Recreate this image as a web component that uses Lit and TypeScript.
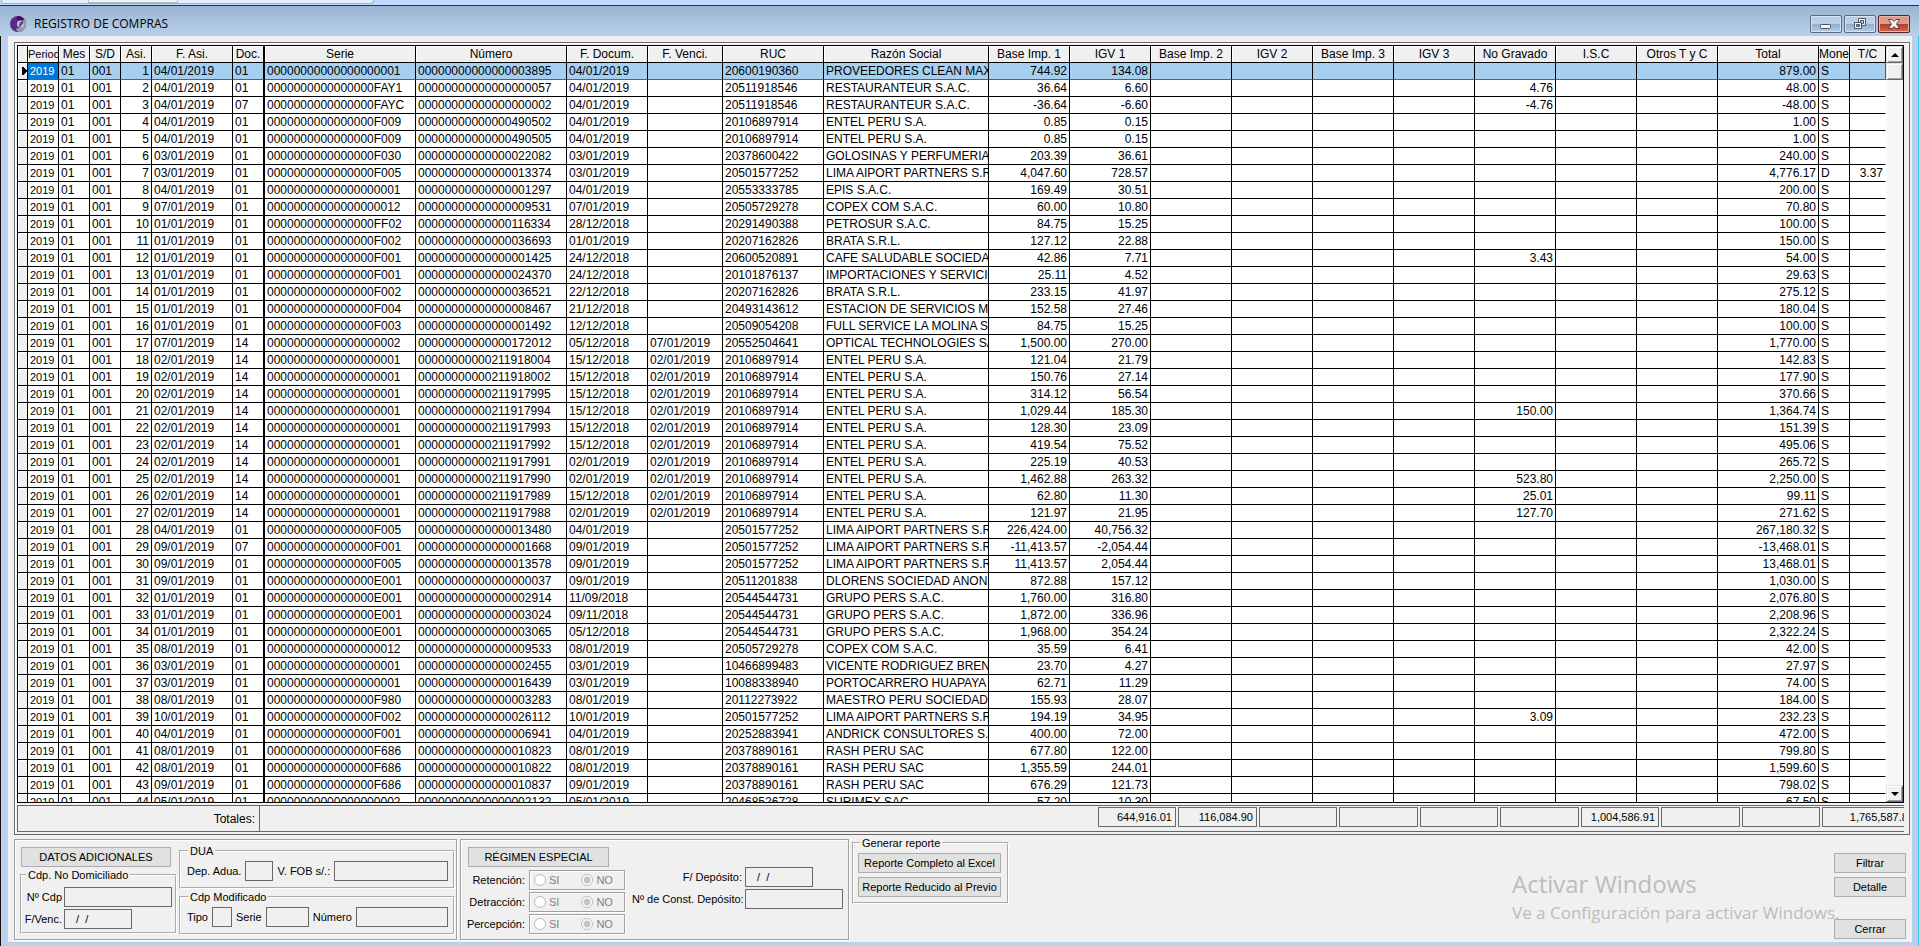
import { LitElement, html, css, nothing } from 'lit';
import { customElement } from 'lit/decorators.js';
import { classMap } from 'lit/directives/class-map.js';

type Align = 'l' | 'r';
interface Column { title: string; cls: string; align: Align; key: number }

const COLUMNS: Column[] = [
  { title: 'Period', cls: 'w31', align: 'l', key: 0 },
  { title: 'Mes', cls: 'w31', align: 'l', key: 1 },
  { title: 'S/D', cls: 'w31', align: 'l', key: 2 },
  { title: 'Asi.', cls: 'w31', align: 'r', key: 3 },
  { title: 'F. Asi.', cls: 'w81', align: 'l', key: 4 },
  { title: 'Doc.', cls: 'w32', align: 'l', key: 5 },
  { title: 'Serie', cls: 'w151', align: 'l', key: 6 },
  { title: 'Número', cls: 'w151', align: 'l', key: 7 },
  { title: 'F. Docum.', cls: 'w81', align: 'l', key: 8 },
  { title: 'F. Venci.', cls: 'w75', align: 'l', key: 9 },
  { title: 'RUC', cls: 'w101', align: 'l', key: 10 },
  { title: 'Razón Social', cls: 'wauto', align: 'l', key: 11 },
  { title: 'Base Imp. 1', cls: 'w81', align: 'r', key: 12 },
  { title: 'IGV 1', cls: 'w81', align: 'r', key: 13 },
  { title: 'Base Imp. 2', cls: 'w81', align: 'r', key: 14 },
  { title: 'IGV 2', cls: 'w81', align: 'r', key: 15 },
  { title: 'Base Imp. 3', cls: 'w81', align: 'r', key: 16 },
  { title: 'IGV 3', cls: 'w81', align: 'r', key: 17 },
  { title: 'No Gravado', cls: 'w81', align: 'r', key: 18 },
  { title: 'I.S.C', cls: 'w81', align: 'r', key: 19 },
  { title: 'Otros T y C', cls: 'w81', align: 'r', key: 20 },
  { title: 'Total', cls: 'w101', align: 'r', key: 21 },
  { title: 'Mone', cls: 'w31', align: 'l', key: 22 },
  { title: 'T/C', cls: 'w36', align: 'r', key: 23 },
];

// F. Asi | Doc | Serie | Número | F. Docum | F. Venci | RUC | Razón | Base 1 | IGV 1 | No gravado | Total | Moneda | T/C
const DATA = `
04/01/2019|01|1|3895|04/01/2019||20600190360|PROVEEDORES CLEAN MAX|744.92|134.08||879.00|S|
04/01/2019|01|FAY1|57|04/01/2019||20511918546|RESTAURANTEUR S.A.C.|36.64|6.60|4.76|48.00|S|
04/01/2019|07|FAYC|2|04/01/2019||20511918546|RESTAURANTEUR S.A.C.|-36.64|-6.60|-4.76|-48.00|S|
04/01/2019|01|F009|490502|04/01/2019||20106897914|ENTEL PERU S.A.|0.85|0.15||1.00|S|
04/01/2019|01|F009|490505|04/01/2019||20106897914|ENTEL PERU S.A.|0.85|0.15||1.00|S|
03/01/2019|01|F030|22082|03/01/2019||20378600422|GOLOSINAS Y PERFUMERIA|203.39|36.61||240.00|S|
03/01/2019|01|F005|13374|03/01/2019||20501577252|LIMA AIPORT PARTNERS S.R|4,047.60|728.57||4,776.17|D|3.37
04/01/2019|01|1|1297|04/01/2019||20553333785|EPIS S.A.C.|169.49|30.51||200.00|S|
07/01/2019|01|12|9531|07/01/2019||20505729278|COPEX COM S.A.C.|60.00|10.80||70.80|S|
01/01/2019|01|FF02|116334|28/12/2018||20291490388|PETROSUR S.A.C.|84.75|15.25||100.00|S|
01/01/2019|01|F002|36693|01/01/2019||20207162826|BRATA S.R.L.|127.12|22.88||150.00|S|
01/01/2019|01|F001|1425|24/12/2018||20600520891|CAFE SALUDABLE SOCIEDAD|42.86|7.71|3.43|54.00|S|
01/01/2019|01|F001|24370|24/12/2018||20101876137|IMPORTACIONES Y SERVICIO|25.11|4.52||29.63|S|
01/01/2019|01|F002|36521|22/12/2018||20207162826|BRATA S.R.L.|233.15|41.97||275.12|S|
01/01/2019|01|F004|8467|21/12/2018||20493143612|ESTACION DE SERVICIOS MA|152.58|27.46||180.04|S|
01/01/2019|01|F003|1492|12/12/2018||20509054208|FULL SERVICE LA MOLINA SA|84.75|15.25||100.00|S|
07/01/2019|14|2|172012|05/12/2018|07/01/2019|20552504641|OPTICAL TECHNOLOGIES SA|1,500.00|270.00||1,770.00|S|
02/01/2019|14|1|211918004|15/12/2018|02/01/2019|20106897914|ENTEL PERU S.A.|121.04|21.79||142.83|S|
02/01/2019|14|1|211918002|15/12/2018|02/01/2019|20106897914|ENTEL PERU S.A.|150.76|27.14||177.90|S|
02/01/2019|14|1|211917995|15/12/2018|02/01/2019|20106897914|ENTEL PERU S.A.|314.12|56.54||370.66|S|
02/01/2019|14|1|211917994|15/12/2018|02/01/2019|20106897914|ENTEL PERU S.A.|1,029.44|185.30|150.00|1,364.74|S|
02/01/2019|14|1|211917993|15/12/2018|02/01/2019|20106897914|ENTEL PERU S.A.|128.30|23.09||151.39|S|
02/01/2019|14|1|211917992|15/12/2018|02/01/2019|20106897914|ENTEL PERU S.A.|419.54|75.52||495.06|S|
02/01/2019|14|1|211917991|02/01/2019|02/01/2019|20106897914|ENTEL PERU S.A.|225.19|40.53||265.72|S|
02/01/2019|14|1|211917990|02/01/2019|02/01/2019|20106897914|ENTEL PERU S.A.|1,462.88|263.32|523.80|2,250.00|S|
02/01/2019|14|1|211917989|15/12/2018|02/01/2019|20106897914|ENTEL PERU S.A.|62.80|11.30|25.01|99.11|S|
02/01/2019|14|1|211917988|02/01/2019|02/01/2019|20106897914|ENTEL PERU S.A.|121.97|21.95|127.70|271.62|S|
04/01/2019|01|F005|13480|04/01/2019||20501577252|LIMA AIPORT PARTNERS S.R|226,424.00|40,756.32||267,180.32|S|
09/01/2019|07|F001|1668|09/01/2019||20501577252|LIMA AIPORT PARTNERS S.R|-11,413.57|-2,054.44||-13,468.01|S|
09/01/2019|01|F005|13578|09/01/2019||20501577252|LIMA AIPORT PARTNERS S.R|11,413.57|2,054.44||13,468.01|S|
09/01/2019|01|E001|37|09/01/2019||20511201838|DLORENS SOCIEDAD ANON|872.88|157.12||1,030.00|S|
01/01/2019|01|E001|2914|11/09/2018||20544544731|GRUPO PERS S.A.C.|1,760.00|316.80||2,076.80|S|
01/01/2019|01|E001|3024|09/11/2018||20544544731|GRUPO PERS S.A.C.|1,872.00|336.96||2,208.96|S|
01/01/2019|01|E001|3065|05/12/2018||20544544731|GRUPO PERS S.A.C.|1,968.00|354.24||2,322.24|S|
08/01/2019|01|12|9533|08/01/2019||20505729278|COPEX COM S.A.C.|35.59|6.41||42.00|S|
03/01/2019|01|1|2455|03/01/2019||10466899483|VICENTE RODRIGUEZ BREN|23.70|4.27||27.97|S|
03/01/2019|01|1|16439|03/01/2019||10088338940|PORTOCARRERO HUAPAYA|62.71|11.29||74.00|S|
08/01/2019|01|F980|3283|08/01/2019||20112273922|MAESTRO PERU SOCIEDAD|155.93|28.07||184.00|S|
10/01/2019|01|F002|26112|10/01/2019||20501577252|LIMA AIPORT PARTNERS S.R|194.19|34.95|3.09|232.23|S|
04/01/2019|01|F001|6941|04/01/2019||20252883941|ANDRICK CONSULTORES S.|400.00|72.00||472.00|S|
08/01/2019|01|F686|10823|08/01/2019||20378890161|RASH PERU SAC|677.80|122.00||799.80|S|
08/01/2019|01|F686|10822|08/01/2019||20378890161|RASH PERU SAC|1,355.59|244.01||1,599.60|S|
09/01/2019|01|F686|10837|09/01/2019||20378890161|RASH PERU SAC|676.29|121.73||798.02|S|
05/01/2019|01|2|2132|05/01/2019||20468526728|SURIMEX SAC|57.20|10.30||67.50|S|`;

const ROWS: string[][] = DATA.trim().split('\n').map((line, i) => {
  const [fAsi, doc, serie, num, fDoc, fVen, ruc, name, base, igv, noGrav, total, cur, tc] = line.split('|');
  return ['2019', '01', '001', String(i + 1), fAsi, doc, serie.padStart(20, '0'), num.padStart(20, '0'),
    fDoc, fVen, ruc, name, base, igv, '', '', '', '', noGrav, '', '', total, cur, tc];
});

const TOTALS = ['644,916.01', '116,084.90', '', '', '', '', '1,004,586.91', '', '', '1,765,587.82'];

@customElement('compras-grid')
export class ComprasGrid extends LitElement {
  static styles = css`
    :host { display: flex; flex: 1 1 0; min-height: 0; border: 1px solid #000; background: #fff; overflow: hidden; }
    .view { flex: 1; min-width: 0; overflow: hidden; }
    table { width: 100%; table-layout: fixed; border-collapse: separate; border-spacing: 0; font: 12px/16px "Liberation Sans", Arial, sans-serif; color: #000; }
    th, td { box-sizing: border-box; height: 17px; padding: 0 2px; border-right: 1px solid #000; border-bottom: 1px solid #000; overflow: hidden; white-space: nowrap; font-weight: 400; }
    th { background: #f0f0f0; text-align: center; box-shadow: inset 1px 1px 0 #fff; padding: 0; }
    td { text-align: left; }
    td.r { text-align: right; }
    .period { font-size: 11px; }
    th.period { text-align: left; }
    td.doc, th.doc { border-right-width: 2px; }
    td.last { border-right-color: #fff; }
    td.mark { background: #f0f0f0; padding: 0; box-shadow: inset 1px 1px 0 #fff; }
    tr.sel td { background: #a6cff0; border-bottom-color: #0078d7; }
    tr.sel td.mark { background: #f0f0f0; border-bottom-color: #000; }
    tr.sel td.period { background: #0078d7; color: #fff; }
    tr.sel td.last { border-right-color: #0078d7; }
    .arrow { display: block; margin-left: 4px; }
    .w10 { width: 10px; } .w31 { width: 31px; } .w32 { width: 32px; } .w36 { width: 36px; } .w75 { width: 75px; }
    .w81 { width: 81px; } .w101 { width: 101px; } .w151 { width: 151px; }
    .bar { flex: none; width: 17px; display: flex; flex-direction: column; background: repeating-conic-gradient(#f0f0f0 0 25%, #fff 0 50%) 0 0 / 2px 2px; }
    .bar button, .thumb { box-sizing: border-box; width: 17px; height: 17px; padding: 0; background: #f0f0f0; border: 1px solid; border-color: #e3e3e3 #696969 #696969 #e3e3e3; box-shadow: inset 1px 1px 0 #fff, inset -1px -1px 0 #a0a0a0; display: flex; align-items: center; justify-content: center; }
    .bar .down { margin-top: auto; }
  `;

  render() {
    return html`
      <div class="view">
        <table>
          <colgroup>
            <col class="w10">${COLUMNS.map((c) => html`<col class=${c.cls}>`)}
          </colgroup>
          <thead>
            <tr>
              <th></th>
              ${COLUMNS.map((c) => html`<th class=${classMap({ period: c.key === 0, doc: c.key === 5 })}>${c.title}</th>`)}
            </tr>
          </thead>
          <tbody>
            ${ROWS.map((row, i) => html`
              <tr class=${i === 0 ? 'sel' : ''}>
                <td class="mark">${i === 0 ? html`<svg class="arrow" width="5" height="8" viewBox="0 0 5 8"><path d="M0 0h2v1h1v1h1v1h1v2h-1v1h-1v1h-1v1h-2z"/></svg>` : nothing}</td>
                ${COLUMNS.map((c) => html`<td class=${classMap({ r: c.align === 'r', period: c.key === 0, doc: c.key === 5, last: c.key === 23 })}>${row[c.key]}</td>`)}
              </tr>`)}
          </tbody>
        </table>
      </div>
      <div class="bar">
        <button aria-label="Subir"><svg width="8" height="4" viewBox="0 0 8 4"><path d="M0 4L4 0L8 4z"/></svg></button>
        <div class="thumb"></div>
        <button class="down" aria-label="Bajar"><svg width="8" height="4" viewBox="0 0 8 4"><path d="M0 0h8L4 4z"/></svg></button>
      </div>`;
  }
}

@customElement('app-root')
export class AppRoot extends LitElement {
  static styles = css`
    :host { display: flex; flex-direction: column; height: 100vh; position: relative; overflow: hidden; font: 11px/14px "Liberation Sans", Arial, sans-serif; color: #000; background: #b9d1ea; }
    * { box-sizing: border-box; }
    .strip { flex: none; height: 6px; background: #bfdbff; border-bottom: 1px solid #2b3440; padding-left: 1px; }
    .tab { width: 373px; height: 4px; background: #e1f0fa; border: 1px solid #86b9d8; border-top: 0; border-radius: 0 0 3px 3px; padding-left: 86px; }
    .slot { width: 90px; height: 3px; background: #f2f2f2; border: 1px solid #b4bcc4; border-top: 0; }
    .title { flex: none; height: 30px; display: flex; align-items: center; padding: 6px 9px 0 10px; background: linear-gradient(#9ab3d2, #b9d1ea); }
    h1 { margin: 0 auto 0 8px; font: 12px/16px "Open Sans", "Noto Sans", sans-serif; }
    .caps { display: flex; gap: 2px; }
    .cap { width: 32px; height: 18px; padding: 0; border: 1px solid #5b6b80; border-radius: 2px; box-shadow: inset 0 0 0 1px #d5e3f3; background: linear-gradient(#b9cfe7 50%, #92aece 50%, #b4cbe5); display: flex; align-items: center; justify-content: center; }
    .cap.close { background: linear-gradient(#dc9a8d 50%, #b8381f 50%, #cf6a50); border-color: #5c1f1a; box-shadow: inset 0 0 0 1px #e9b5a9; }
    .frame { flex: 1; min-height: 0; display: flex; padding: 0 6px 4px 7px; border-left: 1px solid #111; border-right: 1px solid #36c8e8; }
    main { flex: 1; min-width: 0; display: flex; flex-direction: column; background: #f0f0f0; padding: 6px 6px 2px; }
    .group { flex: 1; min-height: 0; display: flex; flex-direction: column; gap: 2px; border: 1px solid #696969; margin-right: -4px; padding: 2px 5px 2px 2px; box-shadow: inset 1px 1px 0 #fff; }
    .totals { flex: none; height: 27px; display: flex; border: 1px solid #696969; border-right: 0; }
    .tlabel { width: 242px; border-right: 1px solid #696969; text-align: right; padding-right: 4px; font-size: 12px; line-height: 26px; }
    .boxes { width: 806px; margin-left: auto; display: flex; gap: 2px; padding-top: 1px; overflow: hidden; }
    .boxes output { flex: none; width: 78px; height: 20px; border: 1px solid #696969; text-align: right; padding-right: 3px; line-height: 18px; }
    .boxes output:nth-child(even) { width: 79px; }
    .boxes output:last-child { width: 96px; }
    .bottom { flex: none; display: flex; align-items: flex-start; gap: 3px; margin-top: 1px; }
    .panel { margin-top: 3px; height: 101px; display: flex; border: 1px solid #a0a0a0; box-shadow: 1px 1px 0 #fff, inset 1px 1px 0 #fff; }
    fieldset { margin: 0; min-width: 0; border: 2px groove #fff; padding: 0; }
    legend { padding: 0 2px; margin-left: 7px; line-height: 14px; }
    button.btn { height: 20px; padding: 0; border: 1px solid #adadad; background: #e1e1e1; font: inherit; color: #000; display: block; }
    input.t { height: 20px; min-width: 0; border: 1px solid #696969; background: #f0f0f0; font: inherit; padding: 0 8px; border-radius: 0; margin: 0; color: #000; }
    .p1 { width: 443px; padding: 4px 1px 0 5px; gap: 2px; }
    .colA { width: 157px; padding-top: 3px; }
    .colA .btn { width: 150px; margin-left: 1px; }
    .colA fieldset { height: 66px; margin-top: 1px; padding: 5px 3px 0 2px; }
    .colA legend, .rep legend { margin-left: 2px; }
    .line { display: flex; align-items: center; gap: 4px; }
    .line label { white-space: nowrap; }
    .colA .line { gap: 2px; }
    .colA .line + .line { margin-top: 2px; }
    .colA .line label { width: 38px; text-align: right; }
    .colB { flex: 1; min-width: 0; }
    .colB fieldset { height: 45px; }
    .colB fieldset + fieldset { margin-top: 1px; }
    .colB .line { padding: 3px 5px 0 6px; }
    .w28 { width: 28px; } .w20 { width: 20px; } .w44 { width: 43px; } .w68 { width: 68px; } .fill { flex: 1; width: 0; }
    input.small { padding: 0 2px; }
    .p2 { width: 389px; padding: 7px 5px 0 5px; justify-content: space-between; }
    .p2 .btn { width: 141px; margin-left: 2px; }
    .opt { display: flex; align-items: center; gap: 4px; margin-top: 3px; height: 19px; }
    .opt .name { width: 59px; text-align: right; white-space: nowrap; }
    .choices { width: 96px; height: 20px; display: flex; align-items: center; border: 1px solid #a0a0a0; box-shadow: 1px 1px 0 #fff, inset 1px 1px 0 #fff; padding-left: 4px; gap: 22px; color: #808080; }
    .choices label { display: flex; align-items: center; gap: 3px; }
    .choices input { appearance: none; width: 12px; height: 12px; margin: 0; border: 1px solid #bcbcbc; border-radius: 50%; background: #fff; }
    .choices input:checked { background: radial-gradient(circle, #c4c4c4 0 3px, #fff 4px); }
    .dep { display: grid; grid-template-columns: 110px 98px; gap: 2px 3px; align-content: start; align-items: center; padding-top: 20px; }
    .dep label { text-align: right; white-space: nowrap; }
    .rep { width: 157px; height: 68px; padding: 3px 5px 0 4px; }
    .rep .btn { width: 143px; }
    .rep .btn + .btn { margin-top: 4px; }
    .side { margin: 17px 0 0 auto; display: flex; flex-direction: column; gap: 4px; }
    .side .btn { width: 72px; }
    .side .btn:last-child { margin-top: 18px; }
    .mark { position: absolute; right: 80px; bottom: 20px; width: 327px; color: #bcbcbc; font-family: "Open Sans", "Noto Sans", sans-serif; pointer-events: none; white-space: nowrap; }
    .mark strong { display: block; font-weight: 400; font-size: 24px; line-height: 32px; }
    .mark span { display: block; font-size: 17px; line-height: 26px; }
  `;

  private option(name: string, id: string) {
    return html`
      <div class="opt">
        <span class="name" id=${id}>${name}</span>
        <div class="choices" role="radiogroup" aria-labelledby=${id}>
          <label><input type="radio" name=${id} disabled>SI</label>
          <label><input type="radio" name=${id} disabled checked>NO</label>
        </div>
      </div>`;
  }

  render() {
    return html`
      <div class="strip"><div class="tab"><div class="slot"></div></div></div>
      <header class="title">
        <svg width="16" height="16" viewBox="0 0 16 16" aria-hidden="true">
          <circle cx="8" cy="8" r="8" fill="#5a2a86"/>
          <path d="M8 0a8 8 0 0 1 6 3L11 5 6 3z" fill="#3b0f5c"/>
          <path d="M14.500 3.500a8 8 0 0 1-6 12.500c-1.500-1-2.500-2-2-4 4 1 6.500-2 5.500-7z" fill="#9d9aa8"/>
          <circle cx="10.500" cy="8" r="3.500" fill="#b4cae4"/>
          <path d="M9 10.500c0-3 1-5 4-5.500l.5 2-3.500 4z" fill="#6a3a95"/>
        </svg>
        <h1>REGISTRO DE COMPRAS</h1>
        <div class="caps">
          <button class="cap" aria-label="Minimizar"><svg width="12" height="9" viewBox="0 0 12 9"><rect x=".5" y="4.500" width="10" height="4" rx="1" fill="#f4f4f4" stroke="#4d5560"/></svg></button>
          <button class="cap" aria-label="Restaurar"><svg width="13" height="12" viewBox="0 0 13 12" fill="#f4f4f4" stroke="#4d5560"><path fill-rule="evenodd" d="M4.500 .5h7v7h-7zM6.500 2.500v3h3v-3z"/><path fill-rule="evenodd" d="M.5 4.500h7v6h-7zM2.500 6.500v2h3v-2z"/></svg></button>
          <button class="cap close" aria-label="Cerrar ventana"><svg width="12" height="10" viewBox="0 0 12 10"><path d="M.5 .5h3.500L6 2.500 8 .5h3.500L8.500 5l3 4.500H8L6 7.500 4 9.500H.5L3.500 5z" fill="#f6f6f6" stroke="#544050"/></svg></button>
        </div>
      </header>
      <div class="frame">
        <main>
          <section class="group">
            <compras-grid></compras-grid>
            <div class="totals">
              <div class="tlabel">Totales:</div>
              <div class="boxes">${TOTALS.map((t) => html`<output>${t}</output>`)}</div>
            </div>
          </section>
          <section class="bottom">
            <div class="panel p1">
              <div class="colA">
                <button class="btn">DATOS ADICIONALES</button>
                <fieldset>
                  <legend>Cdp. No Domiciliado</legend>
                  <div class="line"><label for="cdp">Nº Cdp</label><input id="cdp" class="t fill"></div>
                  <div class="line"><label for="venc">F/Venc.</label><input id="venc" class="t w68" value=" /  /"></div>
                </fieldset>
              </div>
              <div class="colB">
                <fieldset>
                  <legend>DUA</legend>
                  <div class="line">
                    <label for="adua">Dep. Adua.</label><input id="adua" class="t w28 small">
                    <label for="fob">V. FOB s/.:</label><input id="fob" class="t fill">
                  </div>
                </fieldset>
                <fieldset>
                  <legend>Cdp Modificado</legend>
                  <div class="line">
                    <label for="tipo">Tipo</label><input id="tipo" class="t w20 small">
                    <label for="serie">Serie</label><input id="serie" class="t w44 small">
                    <label for="numero">Número</label><input id="numero" class="t fill">
                  </div>
                </fieldset>
              </div>
            </div>
            <div class="panel p2">
              <div>
                <button class="btn">RÉGIMEN ESPECIAL</button>
                ${this.option('Retención:', 'ret')}
                ${this.option('Detracción:', 'det')}
                ${this.option('Percepción:', 'per')}
              </div>
              <div class="dep">
                <label for="fdep">F/ Depósito:</label><input id="fdep" class="t w68" value=" /  /">
                <label for="cdep">Nº de Const. Depósito:</label><input id="cdep" class="t">
              </div>
            </div>
            <fieldset class="rep">
              <legend>Generar reporte</legend>
              <button class="btn">Reporte Completo al Excel</button>
              <button class="btn">Reporte Reducido al Previo</button>
            </fieldset>
            <div class="side">
              <button class="btn">Filtrar</button>
              <button class="btn">Detalle</button>
              <button class="btn">Cerrar</button>
            </div>
          </section>
        </main>
      </div>
      <div class="mark"><strong>Activar Windows</strong><span>Ve a Configuración para activar Windows.</span></div>`;
  }
}
